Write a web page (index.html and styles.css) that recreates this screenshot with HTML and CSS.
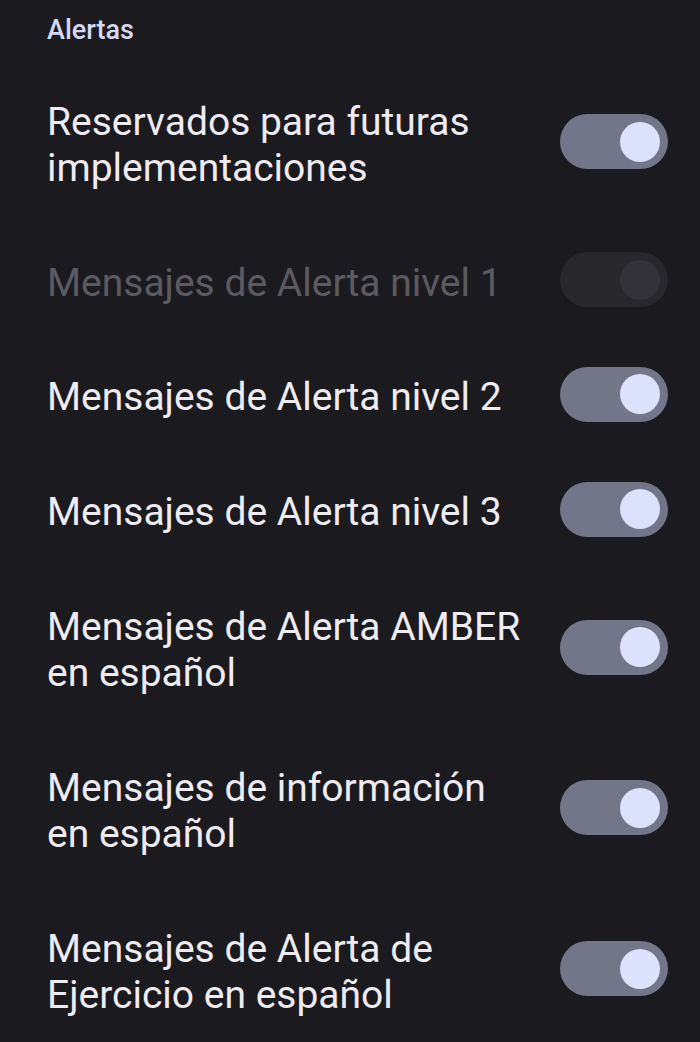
FILE: index.html
```html
<!DOCTYPE html>
<html lang="es">
<head>
  <meta charset="UTF-8">
  <meta name="viewport" content="width=device-width, initial-scale=1.0">
  <title>Alertas</title>
  <link rel="stylesheet" href="styles.css">
</head>
<body>
  <div class="settings">
    <h2 class="section-title">Alertas</h2>

    <div class="row">
      <span class="label">Reservados para futuras implementaciones</span>
      <span class="switch on"><span class="thumb"></span></span>
    </div>

    <div class="row disabled">
      <span class="label">Mensajes de Alerta nivel 1</span>
      <span class="switch"><span class="thumb"></span></span>
    </div>

    <div class="row">
      <span class="label">Mensajes de Alerta nivel 2</span>
      <span class="switch on"><span class="thumb"></span></span>
    </div>

    <div class="row">
      <span class="label">Mensajes de Alerta nivel 3</span>
      <span class="switch on"><span class="thumb"></span></span>
    </div>

    <div class="row">
      <span class="label">Mensajes de Alerta AMBER en español</span>
      <span class="switch on"><span class="thumb"></span></span>
    </div>

    <div class="row">
      <span class="label">Mensajes de información en español</span>
      <span class="switch on"><span class="thumb"></span></span>
    </div>

    <div class="row">
      <span class="label">Mensajes de Alerta de Ejercicio en español</span>
      <span class="switch on"><span class="thumb"></span></span>
    </div>
  </div>
</body>
</html>
```

FILE: styles.css
```css
body {
  font-family: Roboto, "Noto Sans", sans-serif;
  background-color: #1b1a1f;
  margin: 0;
  padding: 0;
  overflow: hidden;
}
.settings {
  padding: 0 32px 0 47px;
}
.section-title {
  margin: 0;
  padding-top: 14px;
  font-size: 27px;
  line-height: 32px;
  font-weight: 500;
  color: #d5d9f6;
}
.row {
  display: flex;
  align-items: center;
  justify-content: space-between;
  padding: 34.4px 0;
}
.section-title + .row {
  margin-top: 18.5px;
}
.label {
  width: 480px;
  font-size: 39px;
  line-height: 46px;
  color: #eeebf1;
}
.switch {
  display: flex;
  align-items: center;
  justify-content: flex-end;
  flex-shrink: 0;
  width: 108px;
  height: 55px;
  margin: -8px 0 -2px;
  padding-right: 8px;
  box-sizing: border-box;
  border-radius: 28px;
  background: #28272c;
}
.thumb {
  width: 40px;
  height: 40px;
  border-radius: 50%;
  background: #333238;
}
.switch.on {
  background: #737689;
}
.switch.on .thumb {
  background: #dce2fb;
}
.disabled .label {
  color: #5b5a60;
}
```
